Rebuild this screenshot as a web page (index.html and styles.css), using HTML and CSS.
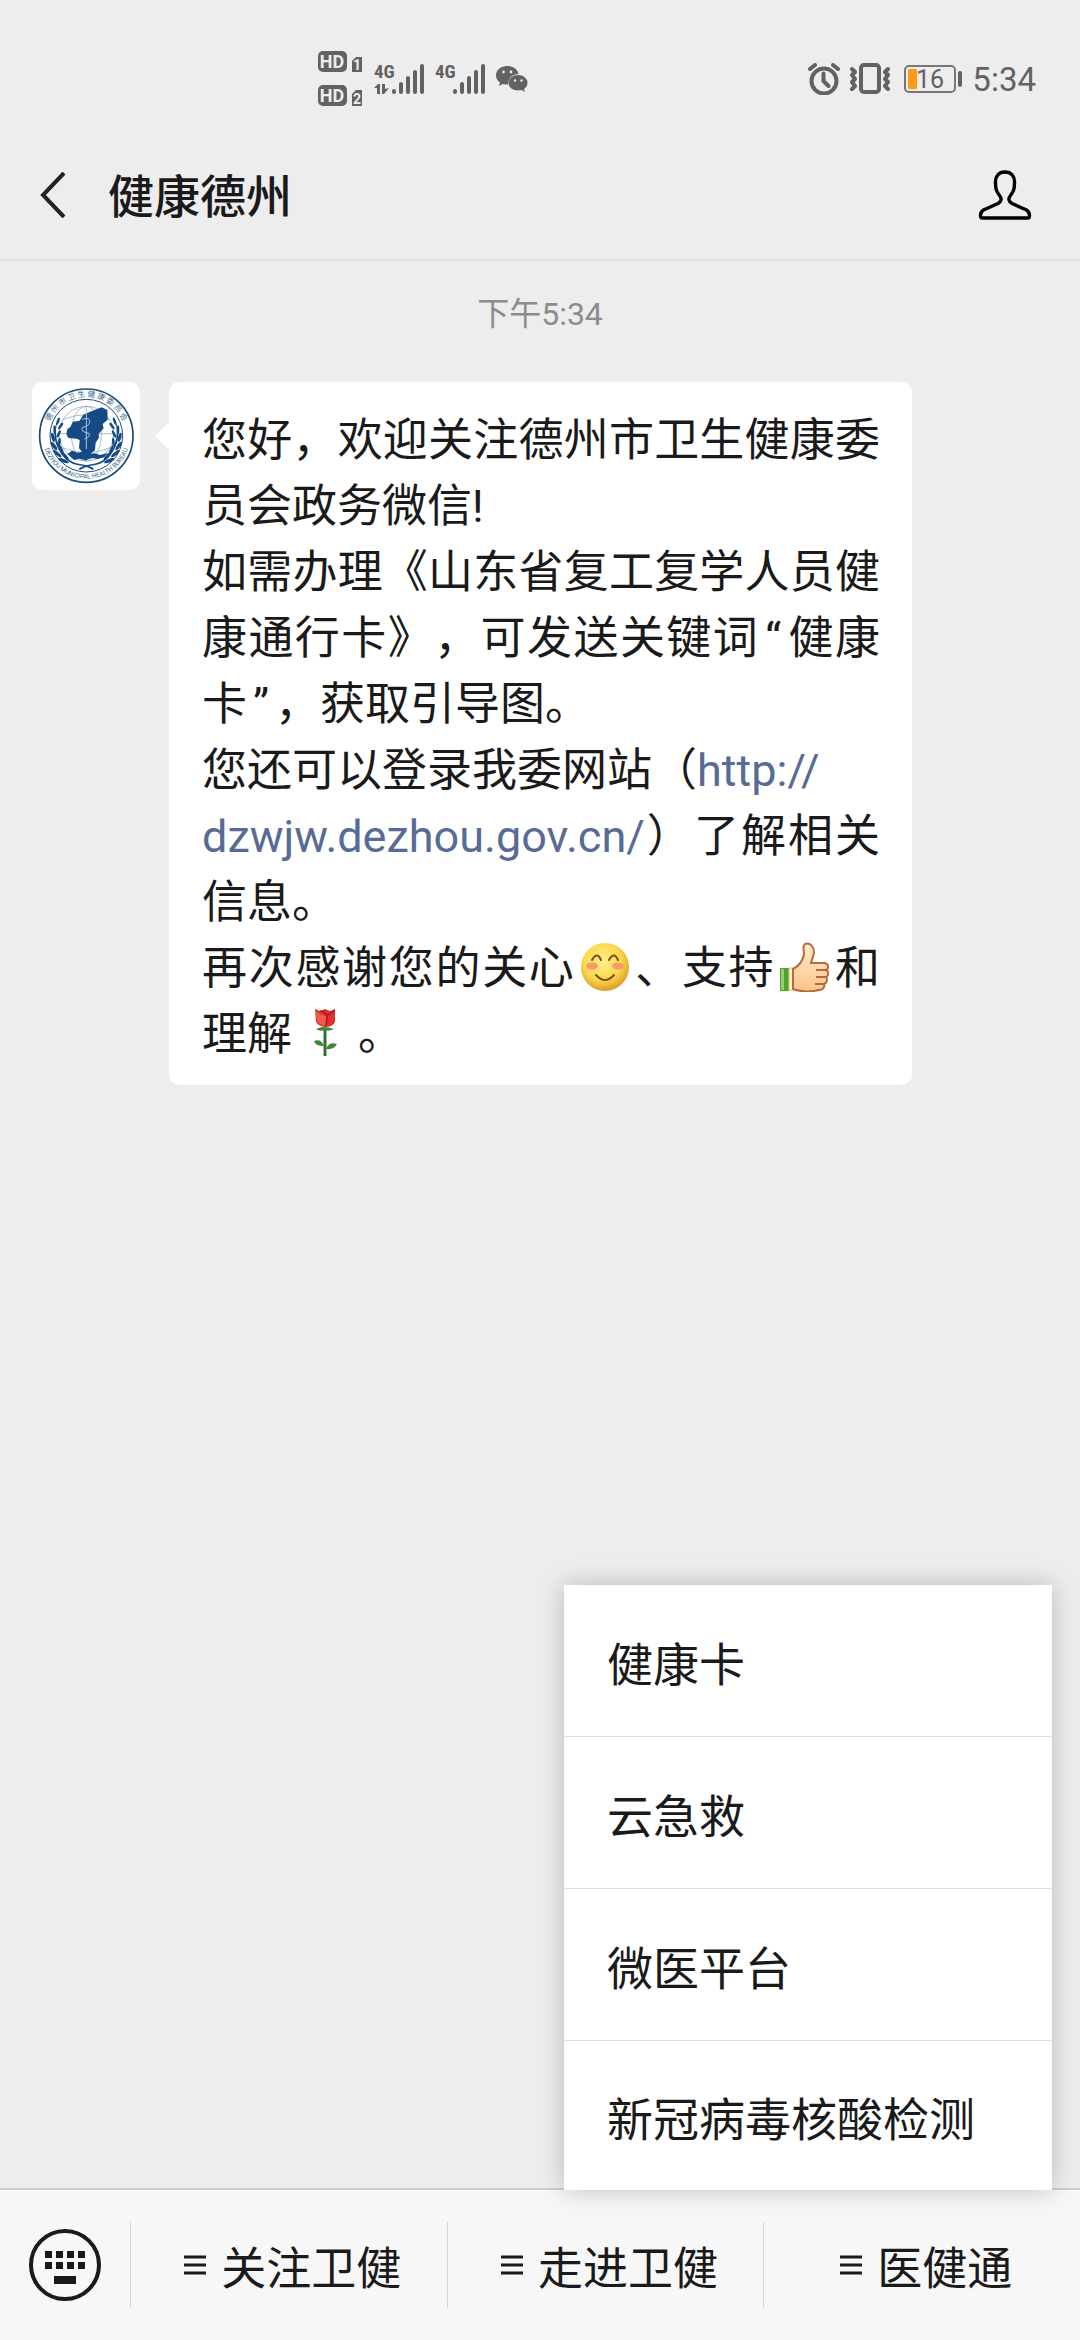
FILE: index.html
```html
<!DOCTYPE html>
<html lang="zh-CN">
<head>
  <meta charset="UTF-8" />
  <meta name="viewport" content="width=device-width, initial-scale=1.0"/>
  <title>健康德州</title>
  <link rel="stylesheet" href="styles.css">
</head>
<body>

  <div class="status-bar">
    <div class="status-left">
      <svg class="hd-icon" width="46" height="56" viewBox="0 0 46 56">
        <rect x="0" y="0" width="29" height="21" rx="5"/>
        <text class="cut" x="14" y="17" font-size="18" text-anchor="middle">HD</text>
        <path d="M34 10l4-4h6v15H34z"/>
        <text class="cut" x="39" y="19" font-size="14" text-anchor="middle">1</text>
        <rect x="0" y="34" width="29" height="21" rx="5"/>
        <text class="cut" x="14" y="51" font-size="18" text-anchor="middle">HD</text>
        <path d="M34 43l4-4h6v16H34z"/>
        <text class="cut" x="39" y="53" font-size="14" text-anchor="middle">2</text>
      </svg>
      <svg width="51" height="44" viewBox="0 -6 51 44">
        <text class="net" x="0" y="15" font-size="19">4G</text>
        <path d="M0 25l4-4h2v10H3v-6zM8 21h3v5l4-1-5 6H8z"/>
        <path class="bars" d="M20 29v-1M27 29v-8M34 29V15M41 29V9M48 29V3"/>
      </svg>
      <svg width="51" height="44" viewBox="0 -6 51 44">
        <text class="net" x="0" y="15" font-size="19">4G</text>
        <path class="bars" d="M20 29v-1M27 29v-8M34 29V15M41 29V9M48 29V3"/>
      </svg>
      <svg width="32" height="28" viewBox="0 0 32 28">
        <path d="M11 1C5 1 0 5 0 10.500c0 3 1.500 5.500 4 7L3 21l4-2c1.500.4 3 .5 5 .5C12 13 17 9 22.500 9 21.500 4 17 1 11 1z"/>
        <path d="M22 10c-5 0-9.500 3.500-9.500 8s4.500 7.500 9.500 7.500c1 0 2.500-.2 3.500-.5l3.500 2-1-3c2-1.500 3.500-3.500 3.500-6 0-4.500-4.500-8-9.500-8z"/>
        <g class="eyes"><circle cx="7.500" cy="7" r="1.400"/><circle cx="15" cy="7" r="1.400"/><circle cx="19" cy="15.500" r="1.200"/><circle cx="25.500" cy="15.500" r="1.200"/></g>
      </svg>
    </div>
    <div class="status-right">
      <svg class="line-icon" width="32" height="32" viewBox="0 0 32 32">
        <circle cx="16" cy="18" r="12.500"/>
        <path d="M15.500 10.500V18l5 5M2 6l5-4M30 6l-5-4"/>
      </svg>
      <svg class="line-icon vibrate-icon" width="40" height="32" viewBox="0 0 40 32">
        <rect x="11" y="2" width="18" height="27" rx="3"/>
        <path d="M2 6l3 3-3 3 3 4-3 3 3 4-3 3M38 6l-3 3 3 3-3 4 3 3-3 4 3 3"/>
      </svg>
      <svg class="battery-icon" width="58" height="28" viewBox="0 0 58 28">
        <rect class="case" x="1" y="1" width="50" height="26" rx="4"/>
        <rect class="charge" x="4" y="4" width="9" height="20" rx="1"/>
        <rect class="pole" x="54" y="6" width="4" height="16" rx="2"/>
        <text x="12" y="23" font-size="25">16</text>
      </svg>
      <span class="clock">5:34</span>
    </div>
  </div>

  <header class="chat-header">
    <button class="icon-btn" aria-label="返回">
      <svg width="26" height="46" viewBox="0 0 26 46"><path d="M24 1L3 23l21 22" fill="none" stroke="#222" stroke-width="4"/></svg>
    </button>
    <h1>健康德州</h1>
    <button class="icon-btn" aria-label="公众号资料">
      <svg width="54" height="52" viewBox="0 0 54 52">
        <path d="M27 3c-6 0-10 4-9.500 11 0 7 1.500 9 4 12.500 2.500 3 2 6-1.500 8L5.500 41C3 42.500 2.500 44 2.500 46.500c0 1.500.5 2.500 2 2.500h45c1.500 0 2-1 2-2.500 0-2.500-.5-4-3-5.500L34 34.500c-3.500-2-4-5-1.500-8 2.500-3.500 4-5.500 4-12.500C37 7 33 3 27 3z" fill="none" stroke="#000" stroke-width="3.400"/>
      </svg>
    </button>
  </header>

  <main class="chat">
    <p class="time">下午5:34</p>

    <div class="message">
      <div class="avatar">
        <svg viewBox="0 0 324 324" role="img" aria-label="德州市卫生健康委员会">
          <defs>
            <path id="top-arc" d="M46 161a117 117 0 0 1 234 0"/>
            <path id="bottom-arc" d="M31 158a132 132 0 0 0 264 0"/>
            <g id="leaves">
              <ellipse cx="94" cy="236" rx="17" ry="5" transform="rotate(22 94 236)"/>
              <ellipse cx="100" cy="222" rx="15" ry="4" transform="rotate(48 100 222)"/>
              <ellipse cx="76" cy="215" rx="16" ry="5" transform="rotate(40 76 215)"/>
              <ellipse cx="88" cy="202" rx="14" ry="4" transform="rotate(65 88 202)"/>
              <ellipse cx="66" cy="192" rx="15" ry="5" transform="rotate(55 66 192)"/>
              <ellipse cx="82" cy="180" rx="13" ry="4" transform="rotate(95 82 180)"/>
              <ellipse cx="63" cy="166" rx="14" ry="5" transform="rotate(75 63 166)"/>
              <ellipse cx="80" cy="156" rx="12" ry="4" transform="rotate(115 80 156)"/>
              <ellipse cx="68" cy="143" rx="13" ry="4" transform="rotate(90 68 143)"/>
              <ellipse cx="86" cy="132" rx="12" ry="4" transform="rotate(125 86 132)"/>
              <ellipse cx="78" cy="118" rx="12" ry="4" transform="rotate(110 78 118)"/>
              <path d="M75 120Q62 170 94 218q22 24 50 28 28 4 42 14l-4 4q-18-12-44-14-28-4-48-30Q54 168 75 120z"/>
            </g>
          </defs>
          <circle class="ring" cx="163" cy="161" r="140" stroke-width="5"/>
          <circle class="ring" cx="163" cy="161" r="109" stroke-width="3"/>
          <g class="globe">
            <circle cx="163" cy="155" r="82"/>
            <ellipse cx="163" cy="155" rx="45" ry="82"/>
            <path d="M163 73v164M81 155h164M94 112q69-28 138 0M94 198q69 28 138 0"/>
          </g>
          <g class="ink">
            <path d="M209 76l-31 12-24 10-11 18-20 3-8 16-9 7-3 14 6 12 25 2 9 4-2 25 9 10-2 15 22 6 8-16 11-10 2-22 10-15-1-12 15-16-3-13 15-13-1-29z"/>
            <path d="M106 216l14-10 17 6 12-3 17 8 23-3 15 5 23-6-10 13-20 5-17-3-19 7-20-5-15 4z"/>
            <use href="#leaves"/>
            <use href="#leaves" transform="matrix(-1 0 0 1 326 0)"/>
          </g>
          <path class="staff" d="M163 92v110M151 112q24-8 22 7t-22 17q-7 14 20 18 5 12-14 17"/>
          <text class="seal-cn"><textPath href="#top-arc" startOffset="50%">德 州 市 卫 生 健 康 委 员 会</textPath></text>
          <text class="seal-en"><textPath href="#bottom-arc" startOffset="50%">DEZHOU MUNICIPAL HEALTH BUREAU</textPath></text>
        </svg>
      </div>

      <div class="bubble">
        <p>您好，欢迎关注德州市卫生健康委员会政务微信!</p>
        <p>如需办理《山东省复工复学人员健康通行卡》，可发送关键词<span class="quote">“</span>健康卡<span class="quote">”</span>，获取引导图。</p>
        <p>您还可以登录我委网站（<a href="http://dzwjw.dezhou.gov.cn/">http://<br>dzwjw.dezhou.gov.cn/</a>）了解相关信息。</p>
        <p>再次感谢您的关心<svg class="emoji" viewBox="0 0 50 50" role="img" aria-label="愉快">
            <defs>
              <radialGradient id="face" cx="45%" cy="38%" r="60%"><stop offset="0" stop-color="#fff08a"/><stop offset=".65" stop-color="#fbd84f"/><stop offset="1" stop-color="#dda32b"/></radialGradient>
              <linearGradient id="hand" x2="0" y2="1"><stop offset="0" stop-color="#ffeccb"/><stop offset="1" stop-color="#fdc38c"/></linearGradient>
            </defs>
            <circle cx="25" cy="25" r="24" fill="url(#face)"/>
            <ellipse cx="12" cy="24" rx="6" ry="3.500" fill="#f89a6b"/>
            <ellipse cx="38" cy="24" rx="6" ry="3.500" fill="#f89a6b"/>
            <path d="M12 18q5-9 9 0M29 18q5-9 9 0M16 33q9 10 18 0" fill="none" stroke="#874b12" stroke-width="2" stroke-linecap="round"/>
          </svg>、支持<svg class="emoji" viewBox="0 0 50 50" role="img" aria-label="强">
            <path d="M1 26h9v23H1z" fill="#4fa331"/>
            <path d="M2 27h3v21H2z" fill="#94cf68"/>
            <path d="M10 26h4v22h-4z" fill="#fff4c9" stroke="#d9c488" stroke-width="1"/>
            <path d="M14 27c6-3 10-9 11-15 0-4-2-8 1-10 5-2 9 3 9 8 0 4-2 7-3 11h13c5 0 5 6 2 7 3 1 3 6 0 7 2 2 1 6-2 7 1 3-1 6-5 6-7 2-19 2-26-1z" fill="url(#hand)" stroke="#b9693a" stroke-width="2"/>
            <path d="M37 28h10M37 35h10M36 42h9" stroke="#b9693a" stroke-width="2"/>
          </svg>和理解<svg class="emoji rose" viewBox="0 0 50 50" role="img" aria-label="玫瑰">
            <path d="M25 20v28" stroke="#33702b" stroke-width="3"/>
            <path d="M16 21q8-3 9-2 3 0 9 2-5 3-9 1-5 2-9-1zM24 38q-3-8-10-5 1 5 10 5zM26 41q3-8 11-5-3 6-11 5z" fill="#3d8635"/>
            <path d="M15 1l5 2 5-2 5 2 5-2v13q-2 5-10 5-8-1-9-6z" fill="#e2312e"/>
            <path d="M16 3l5 4 6 1v10q-9-1-10-6z" fill="#f45a4c"/>
            <path d="M20 3q6 1 7 5l-1 10M35 2l-7 5" fill="none" stroke="#991c1c" stroke-width="1.500"/>
          </svg>。</p>
      </div>
    </div>
  </main>

  <footer class="bottom-bar">
    <button class="keyboard-btn" aria-label="切换到键盘">
      <svg width="74" height="74" viewBox="0 0 74 74">
        <circle cx="37" cy="37" r="34" fill="none" stroke="#1a1a1a" stroke-width="4"/>
        <path d="M17 23h7v7h-7zM28 23h7v7h-7zM39 23h7v7h-7zM50 23h7v7h-7zM17 34h7v7h-7zM28 34h7v7h-7zM39 34h7v7h-7zM50 34h7v7h-7zM26 48h22v8H26z" fill="#1a1a1a"/>
      </svg>
    </button>
    <button class="tab"><svg width="22" height="22" viewBox="0 0 22 22"><path d="M0 3h22M0 11h22M0 19h22"/></svg>关注卫健</button>
    <button class="tab"><svg width="22" height="22" viewBox="0 0 22 22"><path d="M0 3h22M0 11h22M0 19h22"/></svg>走进卫健</button>
    <button class="tab"><svg width="22" height="22" viewBox="0 0 22 22"><path d="M0 3h22M0 11h22M0 19h22"/></svg>医健通</button>

    <nav class="popup-menu">
      <button>健康卡</button>
      <button>云急救</button>
      <button>微医平台</button>
      <button>新冠病毒核酸检测</button>
    </nav>
  </footer>

</body>
</html>
```
FILE: styles.css
```css
* {
  box-sizing: border-box;
}

body {
  margin: 0;
  min-height: 100vh;
  display: flex;
  flex-direction: column;
  font-family: Roboto, "Noto Sans CJK SC", sans-serif;
  font-size: 45px;
  color: #1a1a1a;
  background-color: #ededed;
  text-spacing-trim: space-all;
}

button {
  font: inherit;
  color: inherit;
  background: none;
  border: none;
  padding: 0;
  cursor: pointer;
}

svg {
  display: block;
}

/* status bar */
.status-bar {
  display: flex;
  justify-content: space-between;
  align-items: center;
  height: 130px;
  padding: 28px 44px 0 318px;
  fill: #626262;
}

.status-left,
.status-right {
  display: flex;
  align-items: center;
  gap: 10px;
}

.status-bar text {
  font-weight: bold;
}

.status-bar .net {
  font-family: "Liberation Sans Narrow", "Roboto Condensed", Roboto, sans-serif;
}

.status-bar .cut,
.eyes {
  fill: #ededed;
}

.bars {
  stroke: #626262;
  stroke-width: 4;
  stroke-linecap: round;
}

.line-icon {
  fill: none;
  stroke: #626262;
  stroke-width: 4;
  stroke-linecap: round;
  stroke-linejoin: round;
}

.vibrate-icon {
  margin-right: 4px;
}

.battery-icon .case {
  fill: none;
  stroke: #777;
  stroke-width: 2;
}

.battery-icon .charge {
  fill: #ff9a18;
}

.battery-icon text {
  font-weight: normal;
}

.clock {
  font-size: 33px;
  color: #626262;
}

/* header */
.chat-header {
  display: flex;
  align-items: center;
  height: 131px;
  padding: 0 48px 0 40px;
  border-bottom: 2px solid #e0e0e0;
}

.chat-header h1 {
  flex: 1;
  margin: 0 0 0 42px;
  padding-bottom: 4px;
  font-size: 46px;
  font-weight: 500;
}

/* messages */
.chat {
  flex: 1;
  padding: 29px 32px;
}

.time {
  margin: 0 0 44px;
  font-size: 32px;
  line-height: 48px;
  text-align: center;
  color: #8c8c8c;
}

.message {
  display: flex;
  align-items: flex-start;
  gap: 29px;
}

.avatar {
  flex: none;
  width: 108px;
  height: 108px;
  border-radius: 10px;
  background-color: #fff;
}

.bubble {
  position: relative;
  width: 743px;
  padding: 26px 32px 17px 33px;
  border-radius: 10px;
  background-color: #fff;
  line-height: 66px;
  text-align: justify;
}

.bubble::before {
  content: "";
  position: absolute;
  left: -14px;
  top: 40px;
  border: 14px solid transparent;
  border-left-width: 0;
  border-right-color: #fff;
}

.bubble p {
  margin: 0;
}

.bubble a {
  color: #576b95;
  text-decoration: none;
}

.quote {
  padding: 0 6px;
}

.emoji {
  display: inline-block;
  width: 50px;
  height: 50px;
  margin: 0 4px;
  vertical-align: -8px;
}

.emoji.rose {
  margin: 0 8px;
}

/* account seal */
.ring {
  fill: none;
  stroke: #1b4a73;
}

.globe {
  fill: none;
  stroke: #7d9cb5;
  stroke-width: 2;
}

.ink {
  fill: #164a86;
}

.staff {
  fill: none;
  stroke: #a9c6df;
  stroke-width: 3;
}

.seal-cn,
.seal-en {
  fill: #3c688c;
  text-anchor: middle;
}

.seal-cn {
  font-size: 23px;
}

.seal-en {
  font-size: 19px;
}

/* bottom bar */
.bottom-bar {
  position: relative;
  display: flex;
  align-items: center;
  height: 152px;
  border-top: 2px solid #cfcfcf;
  background-color: #f7f7f7;
}

.keyboard-btn {
  width: 130px;
  padding-left: 28px;
}

.tab {
  flex: 1;
  display: flex;
  justify-content: center;
  align-items: center;
  gap: 15px;
  height: 86px;
  padding-left: 8px;
  border-left: 1px solid #d5d5d5;
}

.tab svg path {
  stroke: #1a1a1a;
  stroke-width: 3;
}

.popup-menu {
  position: absolute;
  right: 28px;
  bottom: 100%;
  display: flex;
  flex-direction: column;
  min-width: 488px;
  background-color: #fff;
  box-shadow: 0 0 24px rgba(0, 0, 0, 0.22);
}

.popup-menu button {
  height: 152px;
  padding: 0 43px;
  font-size: 46px;
  text-align: left;
  border-bottom: 1px solid #dedede;
}

.popup-menu button:last-child {
  height: 149px;
  border-bottom: none;
}
```
